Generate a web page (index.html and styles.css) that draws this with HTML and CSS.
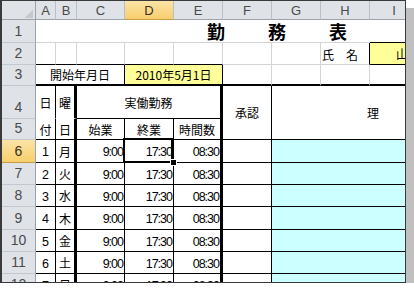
FILE: index.html
```html
<!DOCTYPE html>
<html lang="ja">
<head>
<meta charset="utf-8">
<title>勤務表</title>
<link rel="stylesheet" href="styles.css">
</head>
<body>
<div class="frame">
  <div class="sheet">
    <div class="corner"></div>
    <div class="ch">A</div><div class="ch">B</div><div class="ch">C</div><div class="ch ch-sel">D</div><div class="ch">E</div><div class="ch">F</div><div class="ch">G</div><div class="ch">H</div><div class="ch">I</div>

    <div class="rh">1</div>
    <div class="c s9 title">勤務表</div>

    <div class="rh">2</div>
    <div class="c bb"></div><div class="c bb"></div><div class="c bb"></div><div class="c bb"></div><div class="c bb"></div><div class="c"></div><div class="c"></div>
    <div class="c br name-label">氏　名</div>
    <div class="c name-val">山田　太郎</div>

    <div class="rh">3</div>
    <div class="c s3 bt2 br">開始年月日</div>
    <div class="c s2 bt2 br yel">2010年5月1日</div>
    <div class="c bt2"></div><div class="c bt2"></div><div class="c bt2"></div><div class="c bt2"></div>

    <div class="rh">4</div>
    <div class="c br bn">日</div>
    <div class="c brt bn">曜</div>
    <div class="c s3 bb brt">実働勤務</div>
    <div class="c r2 br bb">承認</div>
    <div class="c s3 r2 bb reason">理</div>

    <div class="rh">5</div>
    <div class="c br bb">付</div>
    <div class="c brt bb">日</div>
    <div class="c br bb">始業</div>
    <div class="c br bb">終業</div>
    <div class="c brt bb">時間数</div>

    <div class="rh rh-sel">6</div>
    <div class="c br bb dg">1</div><div class="c brt bb">月</div>
    <div class="c br bb num">9:00</div><div class="c br bb num sel">17:30</div><div class="c brt bb num">08:30</div>
    <div class="c br bb"></div><div class="c s3 bb cy"></div>

    <div class="rh">7</div>
    <div class="c br bb dg">2</div><div class="c brt bb">火</div>
    <div class="c br bb num">9:00</div><div class="c br bb num">17:30</div><div class="c brt bb num">08:30</div>
    <div class="c br bb"></div><div class="c s3 bb cy"></div>

    <div class="rh">8</div>
    <div class="c br bb dg">3</div><div class="c brt bb">水</div>
    <div class="c br bb num">9:00</div><div class="c br bb num">17:30</div><div class="c brt bb num">08:30</div>
    <div class="c br bb"></div><div class="c s3 bb cy"></div>

    <div class="rh">9</div>
    <div class="c br bb dg">4</div><div class="c brt bb">木</div>
    <div class="c br bb num">9:00</div><div class="c br bb num">17:30</div><div class="c brt bb num">08:30</div>
    <div class="c br bb"></div><div class="c s3 bb cy"></div>

    <div class="rh">10</div>
    <div class="c br bb dg">5</div><div class="c brt bb">金</div>
    <div class="c br bb num">9:00</div><div class="c br bb num">17:30</div><div class="c brt bb num">08:30</div>
    <div class="c br bb"></div><div class="c s3 bb cy"></div>

    <div class="rh">11</div>
    <div class="c br bb dg">6</div><div class="c brt bb">土</div>
    <div class="c br bb num">9:00</div><div class="c br bb num">17:30</div><div class="c brt bb num">08:30</div>
    <div class="c br bb"></div><div class="c s3 bb cy"></div>

    <div class="rh">12</div>
    <div class="c br bb dg">7</div><div class="c brt bb">日</div>
    <div class="c br bb num">9:00</div><div class="c br bb num">17:30</div><div class="c brt bb num">08:30</div>
    <div class="c br bb"></div><div class="c s3 bb cy"></div>
  </div>
</div>
</body>
</html>
```

FILE: styles.css
```css
* { box-sizing: border-box; margin: 0; padding: 0; }
body { margin: 0; background: #fff; font-family: "Noto Sans CJK JP", sans-serif; }

.frame {
  width: 406px;
  height: 283px;
  border-style: solid;
  border-color: #3a3a3a;
  border-width: 1px 1px 1px 2px;
  overflow: hidden;
  background: #fff;
  box-shadow: 8px 8px 0 #c0c0c0;
}

.sheet {
  display: grid;
  grid-template-columns: 34px 20px 21px 48px 49px 49px 49px 49px 49px 49px;
  grid-template-rows: 19px 23px 22px 21px 33px 21px 23px 22px 22px 23px 22px 22px 22px;
}

.sheet > div {
  border-right: 1px solid #d4d4d4;
  border-bottom: 1px solid #d4d4d4;
  display: flex;
  align-items: center;
  justify-content: center;
  font-size: 12px;
  color: #000;
  white-space: nowrap;
  min-width: 0;
}

.sheet > .corner {
  background: #dfe3e8;
  border-right-color: #9ba3ad;
  border-bottom-color: #9ba3ad;
  justify-content: flex-end;
  align-items: flex-end;
  padding: 0 2px 1px 0;
}
.corner::after {
  content: "";
  width: 8px;
  height: 9px;
  background: linear-gradient(to bottom right, transparent 50%, #c4c9cf 50%);
}

.sheet > .ch {
  background: #dfe3e8;
  border-right-color: #b9bfc7;
  border-bottom-color: #9ba3ad;
  font-family: "Liberation Sans", sans-serif;
  font-size: 13px;
  color: #4a4a4a;
}
.sheet > .ch-sel {
  background: linear-gradient(#fbe4a6, #f7cf6c);
  border-bottom-color: #c59d48;
  color: #3a3020;
}

.sheet > .rh {
  background: #dfe3e8;
  border-right-color: #9ba3ad;
  border-bottom-color: #c3c8ce;
  align-items: flex-end;
  padding-bottom: 3px;
  font-family: "Liberation Sans", sans-serif;
  font-size: 14px;
  color: #4a4a4a;
}
.sheet > .rh-sel {
  background: linear-gradient(#fbe4a6, #f7cf6c);
  border-bottom-color: #c59d48;
  color: #3a3020;
}

.s2 { grid-column: span 2; }
.s3 { grid-column: span 3; }
.s9 { grid-column: span 9; }
.r2 { grid-row: span 2; }

.sheet > .bb { border-bottom-color: #000; }
.sheet > .br { border-right-color: #000; }
.sheet > .bn { border-bottom-color: #fff; }
.sheet > .bt2 { border-bottom: 2px solid #000; }
.sheet > .brt { border-right: 3px solid #000; }

.sheet > .yel { background: #ffff99; }
.sheet > .cy { background: #ccffff; }

.sheet > .title {
  justify-content: flex-start;
  align-items: flex-end;
  padding-left: 171px;
  padding-bottom: 1px;
  font-size: 18px;
  line-height: 20px;
  font-weight: 700;
  letter-spacing: 43px;
}

.sheet > .name-label {
  justify-content: flex-end;
  align-items: flex-end;
  padding-right: 11px;
  padding-bottom: 1px;
}

.sheet > .name-val {
  background: #ffff99;
  border-top: 1px solid #000;
  border-bottom: 1px solid #000;
  margin-top: -1px;
  justify-content: flex-start;
  padding-left: 26px;
  overflow: hidden;
}

.sheet > .reason {
  justify-content: flex-start;
  padding-left: 95px;
}

.sheet > .num {
  justify-content: flex-end;
  padding-right: 1px;
  padding-top: 2px;
  font-family: "Liberation Sans", sans-serif;
  font-size: 12.5px;
  letter-spacing: -1px;
}
.sheet > .dg {
  padding-top: 2px;
  font-family: "Liberation Sans", sans-serif;
  font-size: 12.5px;
}

.sheet > .sel { position: relative; }
.sel::after {
  content: "";
  position: absolute;
  left: -2px;
  top: -2px;
  right: 0;
  bottom: -1px;
  border: 2px solid #000;
}
.sel::before {
  content: "";
  position: absolute;
  right: -3px;
  bottom: -3px;
  width: 5px;
  height: 5px;
  background: #000;
  outline: 1px solid #fff;
  z-index: 1;
}
```
